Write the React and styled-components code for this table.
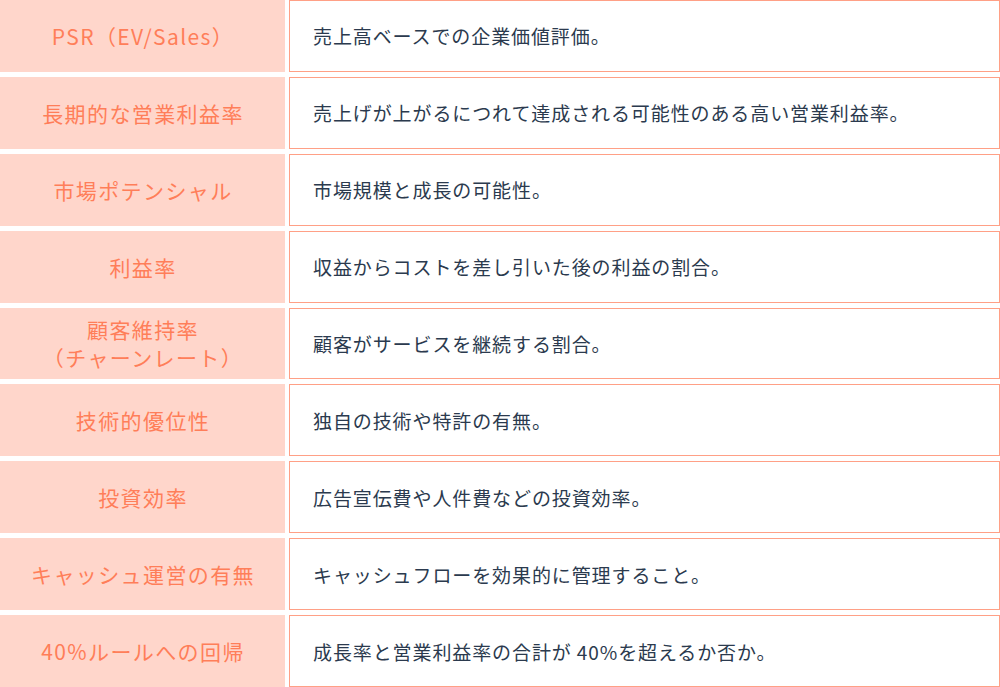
import React from 'react'
import styled, { createGlobalStyle } from 'styled-components'

const GlobalStyle = createGlobalStyle`
  html, body {
    margin: 0;
    padding: 0;
    background: #fff;
  }
  body {
    font-family: 'Noto Sans CJK JP', 'Noto Sans', sans-serif;
  }
`

const rows = [
  ['PSR（EV/Sales）', '売上高ベースでの企業価値評価。'],
  ['長期的な営業利益率', '売上げが上がるにつれて達成される可能性のある高い営業利益率。'],
  ['市場ポテンシャル', '市場規模と成長の可能性。'],
  ['利益率', '収益からコストを差し引いた後の利益の割合。'],
  [['顧客維持率', '（チャーンレート）'], '顧客がサービスを継続する割合。'],
  ['技術的優位性', '独自の技術や特許の有無。'],
  ['投資効率', '広告宣伝費や人件費などの投資効率。'],
  ['キャッシュ運営の有無', 'キャッシュフローを効果的に管理すること。'],
  ['40%ルールへの回帰', '成長率と営業利益率の合計が 40%を超えるか否か。'],
]

const Table = styled.div`
  width: 1000px;
  height: 687px;
  display: grid;
  grid-template-columns: 285px 1fr;
  grid-template-rows: repeat(9, 1fr);
  column-gap: 4px;
  row-gap: 5px;
`

const Label = styled.div`
  background: #ffd6cb;
  color: #ff7e59;
  font-size: 21px;
  font-weight: 400;
  letter-spacing: 1.4px;
  line-height: 28px;
  display: flex;
  flex-direction: column;
  align-items: center;
  justify-content: center;
  text-align: center;
  padding-left: 1px;
`

const Line = styled.span`
  white-space: nowrap;
`

const Desc = styled.div`
  border: 1px solid #ffa086;
  color: #2b3a4e;
  font-size: 19px;
  font-weight: 400;
  letter-spacing: 0.9px;
  display: flex;
  align-items: center;
  padding: 0 0 0 23px;
`

export default function App() {
  return (
    <>
      <GlobalStyle />
      <Table>
        {rows.map(([label, desc], i) => (
          <React.Fragment key={i}>
            <Label>
              {Array.isArray(label)
                ? label.map((l) => <Line key={l}>{l}</Line>)
                : <Line>{label}</Line>}
            </Label>
            <Desc>{desc}</Desc>
          </React.Fragment>
        ))}
      </Table>
    </>
  )
}
